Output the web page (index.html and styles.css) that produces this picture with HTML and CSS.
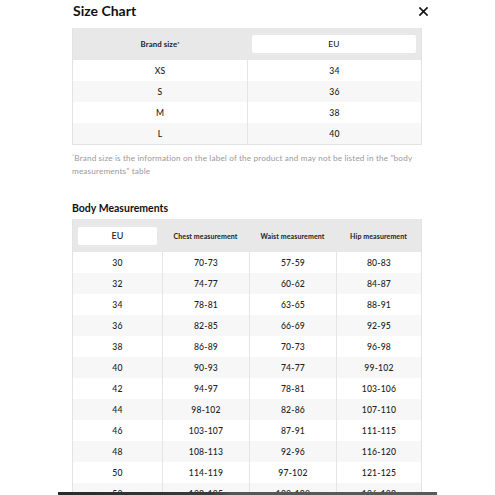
FILE: index.html
```html
<!DOCTYPE html>
<html lang="en">
<head>
<meta charset="utf-8">
<title>Size Chart</title>
<link rel="stylesheet" href="styles.css">
</head>
<body>
<div class="modal">
  <header class="top">
    <h1 class="title">Size Chart</h1>
    <button class="close" aria-label="Close">
      <svg width="9" height="9" viewBox="0 0 9 9"><path d="M1 1L8 8M8 1L1 8" stroke="#111" stroke-width="1.7" stroke-linecap="square"/></svg>
    </button>
  </header>

  <div class="chart two">
    <div class="row head">
      <div class="cell hcell">Brand size<sup>*</sup></div>
      <div class="cell"><span class="pill">EU</span></div>
    </div>
    <div class="row"><div class="cell">XS</div><div class="cell">34</div></div>
    <div class="row alt"><div class="cell">S</div><div class="cell">36</div></div>
    <div class="row"><div class="cell">M</div><div class="cell">38</div></div>
    <div class="row alt"><div class="cell">L</div><div class="cell">40</div></div>
  </div>

  <p class="note"><sup class="star">*</sup>Brand size is the information on the label of the product and may not be listed in the "body measurements" table</p>

  <h2 class="subtitle">Body Measurements</h2>

  <div class="chart four">
    <div class="row head">
      <div class="cell"><span class="pill">EU</span></div>
      <div class="cell hcell">Chest measurement</div>
      <div class="cell hcell">Waist measurement</div>
      <div class="cell hcell">Hip measurement</div>
    </div>
    <div class="row"><div class="cell">30</div><div class="cell">70-73</div><div class="cell">57-59</div><div class="cell">80-83</div></div>
    <div class="row alt"><div class="cell">32</div><div class="cell">74-77</div><div class="cell">60-62</div><div class="cell">84-87</div></div>
    <div class="row"><div class="cell">34</div><div class="cell">78-81</div><div class="cell">63-65</div><div class="cell">88-91</div></div>
    <div class="row alt"><div class="cell">36</div><div class="cell">82-85</div><div class="cell">66-69</div><div class="cell">92-95</div></div>
    <div class="row"><div class="cell">38</div><div class="cell">86-89</div><div class="cell">70-73</div><div class="cell">96-98</div></div>
    <div class="row alt"><div class="cell">40</div><div class="cell">90-93</div><div class="cell">74-77</div><div class="cell">99-102</div></div>
    <div class="row"><div class="cell">42</div><div class="cell">94-97</div><div class="cell">78-81</div><div class="cell">103-106</div></div>
    <div class="row alt"><div class="cell">44</div><div class="cell">98-102</div><div class="cell">82-86</div><div class="cell">107-110</div></div>
    <div class="row"><div class="cell">46</div><div class="cell">103-107</div><div class="cell">87-91</div><div class="cell">111-115</div></div>
    <div class="row alt"><div class="cell">48</div><div class="cell">108-113</div><div class="cell">92-96</div><div class="cell">116-120</div></div>
    <div class="row"><div class="cell">50</div><div class="cell">114-119</div><div class="cell">97-102</div><div class="cell">121-125</div></div>
    <div class="row alt"><div class="cell">52</div><div class="cell">120-125</div><div class="cell">103-108</div><div class="cell">126-130</div></div>
  </div>
</div>
<div class="bottom-bar"></div>
</body>
</html>
```

FILE: styles.css
```css
* { box-sizing: border-box; }
html, body { margin: 0; padding: 0; background: #fff; overflow: hidden; height: 495px; }
body {
  font-family: Lato, "Noto Sans", sans-serif;
  color: #333;
}
.modal {
  width: 350px;
  margin-left: 72px;
}
.top {
  display: flex;
  justify-content: space-between;
  align-items: center;
  height: 22px;
  margin-right: -6px;
}
.title {
  margin: 0;
  font-size: 14px;
  font-weight: 700;
  color: #111;
  line-height: 22px;
  padding-left: 1px;
}
.close {
  border: 0;
  background: none;
  padding: 0;
  width: 9px;
  height: 9px;
  display: flex;
}
.chart {
  margin-top: 6px;
  border: 1px solid #e3e3e3;
  border-top: 0;
}
.row {
  display: grid;
  height: 21px;
}
.two .row { grid-template-columns: 1fr 1fr; }
.four .row { grid-template-columns: 89px 87px 87px 1fr; }
.row.alt { background: #f7f7f7; }
.row.head {
  background: #e8e8e8;
  height: 32px;
}
.cell {
  display: flex;
  align-items: center;
  justify-content: center;
  font-size: 8.6px;
  font-weight: 500;
  letter-spacing: 0.2px;
  color: #222;
  border-left: 1px solid #e5e5e5;
}
.cell:first-child { border-left: 0; }
.head .cell { border-left: 0; padding: 0 5px; }
.hcell {
  font-weight: 700;
  font-size: 7px;
  letter-spacing: 0.1px;
  color: #222;
}
.two .hcell { font-size: 7.8px; }
.hcell sup { font-size: 5px; line-height: 0; vertical-align: 3px; }
.pill {
  flex: 1;
  height: 18px;
  background: #fff;
  border-radius: 2px;
  display: flex;
  align-items: center;
  justify-content: center;
  font-size: 8.4px;
  font-weight: 500;
  color: #222;
}
.four .pill { font-size: 9px; }
.four { margin-top: 4px; }
.four .row.head { height: 33px; }
.note {
  margin: 7px 0 0;
  font-size: 8.2px;
  line-height: 13px;
  color: #9a9a9a;
  letter-spacing: 0.15px;
}
.star { font-size: 5px; line-height: 0; vertical-align: 3px; }
.subtitle {
  margin: 23px 0 0;
  font-size: 10.5px;
  line-height: 14px;
  font-weight: 700;
  color: #111;
}
.bottom-bar {
  position: fixed;
  left: 58px;
  bottom: 0;
  width: 379px;
  height: 3px;
  background: linear-gradient(90deg, #2a2a2a 0%, #3a3a3a 40%, #565656 46%, #5a5a5a 100%);
}
```
